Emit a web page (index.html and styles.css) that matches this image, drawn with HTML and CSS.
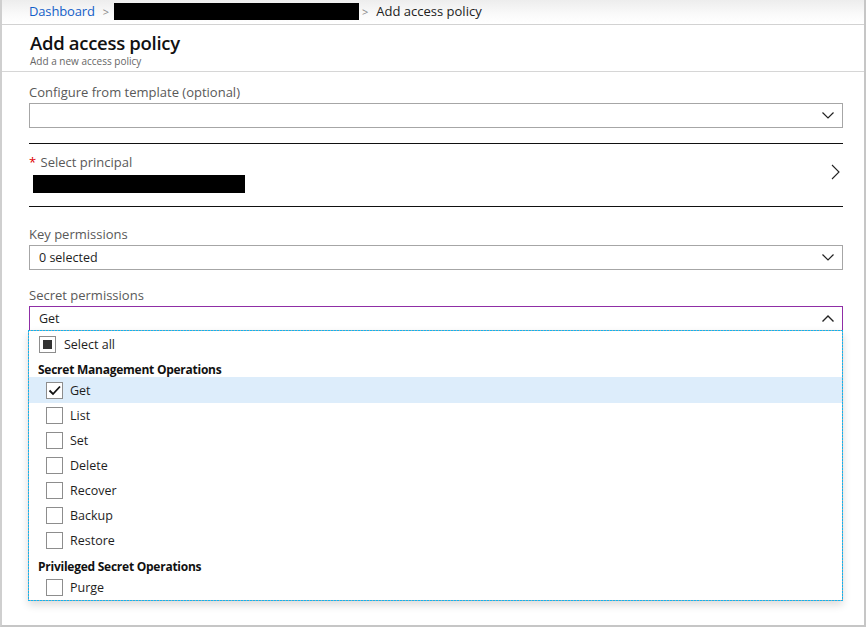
FILE: index.html
```html
<!DOCTYPE html>
<html lang="en">
<head>
<meta charset="utf-8">
<title>Add access policy</title>
<link rel="stylesheet" href="styles.css">
</head>
<body>
<div class="blade">
  <nav class="breadcrumb">
    <a class="crumb-link" href="#">Dashboard</a>
    <span class="sep">&gt;</span>
    <span class="redact crumb-redact"></span>
    <span class="sep">&gt;</span>
    <span class="crumb-current">Add access policy</span>
  </nav>
  <header class="header">
    <h1 class="title">Add access policy</h1>
    <div class="subtitle">Add a new access policy</div>
  </header>
  <main class="form">
    <div class="field field-template">
      <label class="label">Configure from template (optional)</label>
      <div class="select">
        <span class="select-value"></span>
        <svg class="chev" width="12" height="7" viewBox="0 0 12 7"><path d="M0.5 0.5 L6 6 L11.5 0.5" fill="none" stroke="#222" stroke-width="1.2"/></svg>
      </div>
    </div>
    <div class="principal">
      <div class="principal-body">
        <div class="label"><span class="req">*</span> Select principal</div>
        <span class="redact principal-redact"></span>
      </div>
      <svg class="chev-right" width="9" height="16" viewBox="0 0 9 16"><path d="M1 1 L8 8 L1 15" fill="none" stroke="#222" stroke-width="1.1"/></svg>
    </div>
    <div class="field field-key">
      <label class="label">Key permissions</label>
      <div class="select">
        <span class="select-value">0 selected</span>
        <svg class="chev" width="12" height="7" viewBox="0 0 12 7"><path d="M0.5 0.5 L6 6 L11.5 0.5" fill="none" stroke="#222" stroke-width="1.2"/></svg>
      </div>
    </div>
    <div class="field field-secret">
      <label class="label">Secret permissions</label>
      <div class="select select-open">
        <span class="select-value">Get</span>
        <svg class="chev" width="12" height="7" viewBox="0 0 12 7"><path d="M0.5 6.5 L6 1 L11.5 6.5" fill="none" stroke="#222" stroke-width="1.4"/></svg>
      </div>
      <div class="panel">
        <div class="opt opt-all"><span class="box box-partial"><span class="square"></span></span><span>Select all</span></div>
        <div class="group group-first">Secret Management Operations</div>
        <div class="opt opt-item opt-selected"><span class="box"><svg width="15" height="15" viewBox="0 0 15 15"><path d="M2.5 7.5 L6 11 L13 3.5" fill="none" stroke="#111" stroke-width="1.8"/></svg></span><span>Get</span></div>
        <div class="opt opt-item"><span class="box"></span><span>List</span></div>
        <div class="opt opt-item"><span class="box"></span><span>Set</span></div>
        <div class="opt opt-item"><span class="box"></span><span>Delete</span></div>
        <div class="opt opt-item"><span class="box"></span><span>Recover</span></div>
        <div class="opt opt-item"><span class="box"></span><span>Backup</span></div>
        <div class="opt opt-item"><span class="box"></span><span>Restore</span></div>
        <div class="group group-second">Privileged Secret Operations</div>
        <div class="opt opt-item"><span class="box"></span><span>Purge</span></div>
      </div>
    </div>
  </main>
</div>
</body>
</html>
```
FILE: styles.css
```css
* { box-sizing: border-box; }
html, body { margin: 0; padding: 0; background: #fff; }
body {
  font-family: "Open Sans", "Noto Sans", sans-serif;
  font-size: 12.5px;
  color: #1e1e1e;
}
.blade {
  width: 866px;
  height: 627px;
  border-left: 2px solid #cfcfcf;
  border-right: 2px solid #c6c6c6;
  border-bottom: 2px solid #c6c6c6;
  overflow: hidden;
}
.breadcrumb {
  height: 25px;
  display: flex;
  align-items: center;
  padding-left: 27px;
  padding-bottom: 2px;
  background: linear-gradient(#ededed, #fafafa 60%, #ffffff);
  border-bottom: 1px solid #d2d2d2;
  font-size: 13px;
}
.crumb-link { color: #1460c8; text-decoration: none; letter-spacing: -0.15px; }
.sep { color: #888; margin: 0 5px 0 8px; font-size: 11px; }
.redact { display: inline-block; background: #000; }
.crumb-redact { width: 245px; height: 17px; margin-top: 1px; }
.crumb-redact + .sep { margin-left: 3px; margin-right: 8px; }
.crumb-current { color: #222; }
.header {
  height: 47px;
  padding: 6px 0 0 28px;
  border-bottom: 1px solid #d6d6d6;
}
.title {
  margin: 0;
  font-size: 18.5px;
  font-weight: 600;
  line-height: 24px;
  color: #111;
  letter-spacing: -0.3px;
}
.subtitle {
  font-size: 10px;
  color: #666;
  line-height: 13px;
}
.form {
  padding: 12px 21px 0 27px;
  display: flex;
  flex-direction: column;
}
.label {
  display: block;
  line-height: 16px;
  color: #595959;
  font-size: 13px;
}
.select {
  margin-top: 3px;
  height: 25px;
  border: 1px solid #a6a6a6;
  display: flex;
  align-items: center;
  justify-content: space-between;
  padding: 0 8px 0 9px;
  color: #1e1e1e;
}
.select-open { border-color: #8f2ea6; }
.field-template { padding-bottom: 15px; border-bottom: 1px solid #111; }
.principal {
  height: 63px;
  border-bottom: 1px solid #111;
  display: flex;
  align-items: center;
  justify-content: space-between;
  padding-right: 3px;
}
.principal-body { align-self: flex-start; padding-top: 10px; }
.req { color: #e00000; margin-right: 1px; }
.principal-redact { display: block; width: 212px; height: 18px; margin: 5px 0 0 4px; }
.chev-right { margin-bottom: 6px; }
.field-key { margin-top: 19px; }
.field-secret { margin-top: 17px; }
.panel {
  position: relative;
  margin-left: -1px;
  margin-top: -1px;
  border: 1px solid #a8a8a8;
  box-shadow: 0 4px 8px rgba(0,0,0,0.14);
  padding: 1px 0 0;
  height: 271px;
}
.panel::after {
  content: "";
  position: absolute;
  inset: -1px;
  pointer-events: none;
  background:
    repeating-linear-gradient(to right, #12b4ef 0 2px, transparent 2px 3px) top / 100% 1px no-repeat,
    repeating-linear-gradient(to right, #12b4ef 0 2px, transparent 2px 3px) bottom / 100% 1px no-repeat,
    repeating-linear-gradient(to bottom, #12b4ef 0 2px, transparent 2px 3px) left / 1px 100% no-repeat,
    repeating-linear-gradient(to bottom, #12b4ef 0 2px, transparent 2px 3px) right / 1px 100% no-repeat;
}
.opt {
  display: flex;
  align-items: center;
  height: 25px;
  gap: 7px;
}
.opt-all { padding-left: 10px; gap: 8px; }
.opt-item { padding-left: 17px; }
.opt-selected { background: #ddedfb; height: 26px; }
.box {
  width: 17px;
  height: 17px;
  border: 1px solid #8d8d8d;
  background: #fff;
  display: flex;
  align-items: center;
  justify-content: center;
  flex: none;
}
.square { width: 9px; height: 9px; background: #333; }
.group {
  font-weight: 700;
  font-size: 12px;
  letter-spacing: -0.25px;
  padding-left: 9px;
  line-height: 17px;
  color: #111;
}
.group-first { height: 20px; padding-top: 4px; }
.group-second { height: 22px; padding-top: 5px; }
```
